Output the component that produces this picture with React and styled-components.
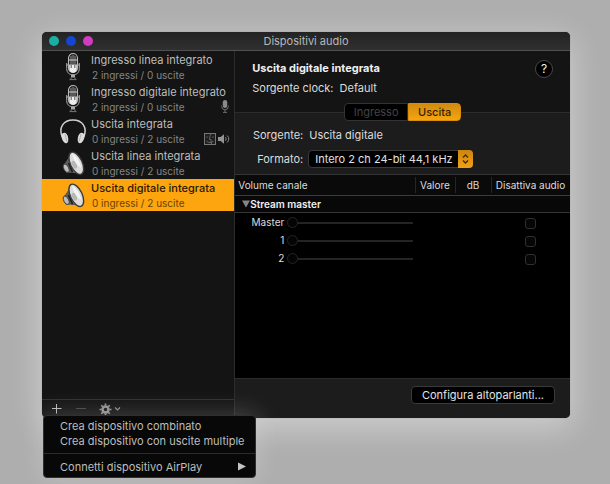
import React, { useState } from 'react';
import styled, { createGlobalStyle } from 'styled-components';

const GlobalStyle = createGlobalStyle`
  *, *::before, *::after { box-sizing: border-box; }
  body { margin: 0; background: #aeaeae; }
  body, button, input, select, table {
    font-family: Inter, "Liberation Sans", sans-serif;
    font-size: 11px;
    line-height: 16px;
  }
  button { margin: 0; padding: 0; border: 0; background: none; color: inherit; }
`;

const Desktop = styled.main`
  display: flex;
  min-height: 100vh;
  padding: 32px 40px 66px 42px;
  overflow: hidden;
`;

const Window = styled.section`
  flex: 1;
  display: flex;
  flex-direction: column;
  min-width: 0;
  border-radius: 5px;
  background: #141414;
  color: #dcdcdc;
  box-shadow: 0 8px 32px 2px rgba(255, 255, 255, 0.4), 0 0 1px #555;
`;

const TitleBar = styled.header`
  display: grid;
  grid-template-columns: 1fr auto 1fr;
  align-items: center;
  height: 19px;
  padding: 0 7px;
  border-bottom: 1px solid #505050;
  border-radius: 5px 5px 0 0;
  background: linear-gradient(#232323, #303030);
`;

const Lights = styled.div`
  display: flex;
  gap: 7px;
`;

const Light = styled.button`
  width: 10px;
  height: 10px;
  border-radius: 50%;
  background: ${(p) => p.$color};
`;

const Title = styled.h1`
  margin: 0;
  font-size: 11px;
  font-weight: 400;
  color: #b8b8b8;
`;

const Panes = styled.div`
  flex: 1;
  display: grid;
  grid-template-columns: minmax(193px, 36.6%) minmax(0, 1fr);
`;

const Sidebar = styled.aside`
  display: flex;
  flex-direction: column;
  border-right: 1px solid #2c2c2c;
`;

const DeviceList = styled.ul`
  flex: 1;
  margin: 0;
  padding: 0;
  list-style: none;
`;

const Device = styled.button`
  display: grid;
  grid-template-columns: 28px minmax(0, 1fr);
  column-gap: 4px;
  align-items: center;
  width: 100%;
  height: 32px;
  padding: 0 0 1px 17px;
  text-align: left;
  color: ${(p) => (p.$selected ? '#2b1800' : '#bdbdbd')};
  background: ${(p) => (p.$selected ? '#fda50f' : 'transparent')};
  font-weight: ${(p) => (p.$selected ? 500 : 400)};
`;

const DeviceArt = styled.svg`
  display: block;
  width: 28px;
  height: 30px;
`;

const DeviceText = styled.span`
  display: grid;
  white-space: nowrap;
`;

const DeviceMeta = styled.span`
  display: flex;
  align-items: center;
  justify-content: space-between;
  height: 14px;
  padding: 0 4px 0 1px;
  font-size: 10px;
  font-weight: 400;
  line-height: 14px;
  color: ${(p) => (p.$selected ? '#6b4300' : '#858585')};
`;

const Badges = styled.span`
  display: flex;
  align-items: center;
  gap: 2px;
`;

const SideFooter = styled.footer`
  position: relative;
  display: flex;
  align-items: center;
  gap: 12px;
  height: 19px;
  padding-left: 9px;
  border-top: 1px solid #303030;
`;

const ToolButton = styled.button`
  display: flex;
  align-items: center;
  gap: 2px;
  height: 16px;
  color: #b4b4b4;
  &:disabled { color: #444; }
`;

const Menu = styled.div`
  position: absolute;
  top: 15px;
  left: 1px;
  z-index: 1;
  width: 213px;
  padding: 2px 0 3px;
  border: 1px solid #303030;
  border-radius: 4px;
  background: #080808;
  box-shadow: 0 0 24px 2px rgba(255, 255, 255, 0.2);
`;

const MenuItem = styled.button`
  display: flex;
  align-items: center;
  justify-content: space-between;
  width: 100%;
  height: 15px;
  padding: 0 9px 0 16px;
  color: #bdbdbd;
  white-space: nowrap;
`;

const MenuRule = styled.hr`
  height: 1px;
  margin: 5px 0;
  border: 0;
  background: #2b2b2b;
`;

const Detail = styled.section`
  display: flex;
  flex-direction: column;
  min-width: 0;
  background: #1c1c1c;
  border-radius: 0 0 5px 0;
`;

const Summary = styled.div`
  display: flex;
  justify-content: space-between;
  align-items: flex-start;
  height: 52px;
  padding: 9px 17px 0 17px;
  background: #141414;
`;

const DeviceTitle = styled.h2`
  margin: 0 0 4px;
  font-size: 11px;
  font-weight: 700;
  color: #f0f0f0;
`;

const Pair = styled.p`
  display: flex;
  gap: 6px;
  margin: 0;
`;

const HelpButton = styled.button`
  width: 18px;
  height: 18px;
  border: 1px solid #484848;
  border-radius: 50%;
  background: #000;
  color: #f0f0f0;
  font-size: 12px;
  line-height: 16px;
`;

const TabStrip = styled.div`
  display: flex;
  justify-content: center;
  background: linear-gradient(#141414 9px, #2c2c2c 9px, #2c2c2c 10px, #1c1c1c 10px);
`;

const Tab = styled.button`
  height: 18px;
  width: ${(p) => (p.$active ? 53 : 64)}px;
  border: 1px solid ${(p) => (p.$active ? '#d98d0a' : '#333')};
  border-radius: ${(p) => (p.$active ? '0 4px 4px 0' : '4px 0 0 4px')};
  background: ${(p) => (p.$active ? 'linear-gradient(#d18a0c, #f5a512)' : '#000')};
  color: ${(p) => (p.$active ? '#3a1c00' : '#444')};
  font-weight: ${(p) => (p.$active ? 500 : 400)};
`;

const Fields = styled.div`
  display: grid;
  grid-template-columns: 51px auto;
  justify-content: start;
  justify-items: start;
  align-items: center;
  gap: 7px 6px;
  padding: 6px 17px 6px;
`;

const FieldLabel = styled.label`
  justify-self: end;
`;

const SelectBox = styled.span`
  display: grid;
  grid-template-columns: minmax(0, 1fr) 15px;
  width: 165px;
  height: 18px;
  margin-left: -1px;
`;

const FormatSelect = styled.select`
  grid-area: 1 / 1 / 2 / 3;
  appearance: none;
  width: 100%;
  height: 18px;
  padding: 0 15px 0 6px;
  border: 1px solid #3a3a3a;
  border-radius: 4px;
  background: #000;
  color: #e0e0e0;
`;

const Stepper = styled.svg`
  grid-area: 1 / 2 / 2 / 3;
  width: 15px;
  height: 18px;
  border-radius: 0 4px 4px 0;
  background: linear-gradient(#cb860e, #f0a115);
  pointer-events: none;
`;

const Channels = styled.div`
  flex: 1;
  border-top: 1px solid #343434;
  border-bottom: 1px solid #2c2c2c;
  background: #000;
`;

const Table = styled.table`
  width: 100%;
  table-layout: fixed;
  border-collapse: separate;
  border-spacing: 0;
  font-size: 10px;
`;

const Col = styled.col`
  width: ${(p) => p.$width};
`;

const HeadCell = styled.th`
  height: 21px;
  padding: 0 0 0 ${(p) => (p.$first ? 3 : 0)}px;
  border-bottom: 1px solid #3c3c3c;
  background: ${(p) =>
    p.$first ? '#0a0a0a' : 'linear-gradient(#262626, #262626) 0 2px / 1px 16px no-repeat #0a0a0a'};
  text-align: ${(p) => (p.$first ? 'left' : 'center')};
  font-weight: 400;
  white-space: nowrap;
`;

const GroupCell = styled.th`
  height: 17px;
  padding: 0 0 0 7px;
  border-bottom: 1px solid #343434;
  background: #080808;
  text-align: left;
  color: #f0f0f0;
`;

const GroupToggle = styled.button`
  display: flex;
  align-items: center;
  font-size: 10px;
  font-weight: 600;
`;

const ChannelRow = styled.tr`
  height: 18px;
`;

const Cell = styled.td`
  padding: 0;
  text-align: center;
  vertical-align: middle;
`;

const Volume = styled.label`
  display: grid;
  grid-template-columns: 49px 126px;
  column-gap: 3px;
  align-items: center;
  text-align: right;
`;

const Slider = styled.input`
  appearance: none;
  width: 126px;
  height: 11px;
  margin: 0;
  background: linear-gradient(#242424, #242424) 10px 5px / 116px 2px no-repeat;
  &::-webkit-slider-thumb {
    appearance: none;
    width: 11px;
    height: 11px;
    border: 1px solid #242424;
    border-radius: 50%;
    background: #040404;
  }
`;

const Mute = styled.input`
  appearance: none;
  display: inline-block;
  vertical-align: middle;
  width: 11px;
  height: 11px;
  margin: 0;
  border: 1px solid #303030;
  border-radius: 3px;
  background: #060606;
  &:checked { background: #fda50f; }
`;

const DetailFooter = styled.footer`
  display: flex;
  justify-content: flex-end;
  padding: 7px 15px 14px;
`;

const PushButton = styled.button`
  height: 18px;
  padding: 0 10px;
  border: 1px solid #3a3a3a;
  border-radius: 4px;
  background: #000;
  color: #e4e4e4;
`;

const MicArt = () => (
  <DeviceArt viewBox="0 0 28 30" aria-hidden="true">
    <rect x="9.5" y="1.5" width="9" height="19" rx="4.5" fill="#242424" stroke="#b8b8b8" strokeWidth="1.1" />
    <path d="M12 4v8M14 3v9M16 4v8" stroke="#9b9b9b" strokeWidth=".9" />
    <path d="M10 8h8" stroke="#ddd" strokeWidth=".9" />
    <path d="M10.2 12.5h7.6v4.5a3.8 3.8 0 0 1-7.6 0z" fill="#ededed" />
    <path d="M12.2 13v3M15.8 13v3" stroke="#555" strokeWidth="1" />
    <path d="M7.7 11v5.5c0 4 2.4 6.3 6.3 6.3s6.3-2.3 6.3-6.3V11M7.5 13h2.5M18 13h2.5" fill="none" stroke="#aaa" strokeWidth="1" />
    <path d="M12 22.5h4v3h-4z" fill="#a8a8a8" />
    <path d="M10.5 27.6h7M12 25.5v2M16 25.5v2" stroke="#777" strokeWidth="1" />
  </DeviceArt>
);

const HeadphonesArt = () => (
  <DeviceArt viewBox="0 0 28 30" aria-hidden="true">
    <path d="M3.2 21C-.6 11.500 4.500 4 14 4s14.600 7.500 10.800 17" fill="none" stroke="#d0d0d0" strokeWidth="1.5" />
    <path d="M3.400 17.500c2.400-1.700 4.900.1 5.600 3.500.7 3.400.3 5.700-1.500 6.200-3.200.7-6.800-7.300-4.100-9.700z" fill="#dcdcdc" />
    <path d="M24.600 17.500c-2.400-1.700-4.900.1-5.600 3.500-.7 3.400-.3 5.700 1.500 6.200 3.200.7 6.800-7.300 4.100-9.700z" fill="#dcdcdc" />
    <path d="M6 18.200l2 7.500M22 18.200l-2 7.500" stroke="#a2a2a2" strokeWidth=".8" />
  </DeviceArt>
);

const SpeakerArt = () => (
  <DeviceArt viewBox="0 0 28 30" aria-hidden="true">
    <path d="M4.500 16.500c2.500-2.200 5-6 6.200-10.500l9.800 20c-4.500-1.200-8.500-1-12-1.200-3-.4-5-5.300-4-8.300z" fill="#5c5c5c" />
    <ellipse cx="7.200" cy="20.300" rx="2.400" ry="4.500" transform="rotate(-25 7.200 20.300)" fill="#bdbdbd" stroke="#333" strokeWidth=".8" />
    <path d="M9.500 15l4 9.200" stroke="#1d1d1d" strokeWidth="1.600" />
    <path d="M11 13l4.500 11.200" stroke="#a6a6a6" strokeWidth="1" />
    <ellipse cx="17.300" cy="15.300" rx="5.900" ry="12" transform="rotate(-25 17.300 15.300)" fill="#dcdcdc" stroke="#3a3a3a" strokeWidth="1.400" />
    <path d="M13 5.800c3.700 1 7.700 7.300 9.400 14.200l-6-4.500z" fill="#f4f4f4" />
    <ellipse cx="15.300" cy="16.800" rx="2.300" ry="4.200" transform="rotate(-25 15.300 16.800)" fill="#b4b8b4" />
  </DeviceArt>
);

const MicBadge = () => (
  <svg width="10" height="13" viewBox="0 0 10 13" role="img" aria-label="Ingresso predefinito">
    <rect x="2.800" y="0" width="4.400" height="8" rx="2.200" fill="#8a8a8a" />
    <path d="M1.700 5.500v1a3.300 3.300 0 0 0 6.600 0v-1M5 10v2M3 12.400h4" fill="none" stroke="#6c6c6c" />
  </svg>
);

const FinderBadge = () => (
  <svg width="12" height="12" viewBox="0 0 12 12" role="img" aria-label="Uscita di sistema">
    <rect x=".5" y=".5" width="11" height="11" fill="#202020" stroke="#777" />
    <path d="M7 .8C5.800 3 5.500 5 5.500 6.500H7c0 2 .2 3.500.6 5M3 3.300v1.500M9 3.300v1.500M2.500 8.200c2 1.700 5 1.700 7 0" fill="none" stroke="#777" strokeWidth=".8" />
  </svg>
);

const SpeakerBadge = () => (
  <svg width="12" height="12" viewBox="0 0 12 12" role="img" aria-label="Uscita predefinita">
    <path d="M0 4h2.600L6 1.200v9.600L2.600 8H0z" fill="#939393" />
    <path d="M7.500 4.200a3 3 0 0 1 0 3.600M9.200 2.500a5.200 5.200 0 0 1 0 7" fill="none" stroke="#868686" strokeWidth="1" />
  </svg>
);

const PlusIcon = () => (
  <svg width="12" height="12" viewBox="0 0 12 12" aria-hidden="true">
    <path d="M5.500 1v9.500M1 5.500h9.500" stroke="currentColor" strokeWidth="1" />
  </svg>
);

const MinusIcon = () => (
  <svg width="12" height="12" viewBox="0 0 12 12" aria-hidden="true">
    <path d="M1 5.500h10" stroke="currentColor" />
  </svg>
);

const GearIcon = () => (
  <svg width="13" height="13" viewBox="0 0 13 13" aria-hidden="true">
    <circle cx="6.500" cy="6.500" r="3" fill="none" stroke="#909090" strokeWidth="2.500" />
    {[0, 45, 90, 135].map((a) => (
      <path key={a} d="M6.500 .5v2M6.500 10.500v2" stroke="#909090" strokeWidth="1.700" transform={`rotate(${a} 6.500 6.500)`} />
    ))}
  </svg>
);

const ChevronIcon = () => (
  <svg width="7" height="6" viewBox="0 0 7 6" aria-hidden="true">
    <path d="M1 1.500l2.500 2.500L6 1.500" fill="none" stroke="#8a8a8a" strokeWidth="1.200" />
  </svg>
);

const devices = [
  { name: 'Ingresso linea integrato', meta: '2 ingressi / 0 uscite', Art: MicArt, badges: [] },
  { name: 'Ingresso digitale integrato', meta: '2 ingressi / 0 uscite', Art: MicArt, badges: [MicBadge] },
  { name: 'Uscita integrata', meta: '0 ingressi / 2 uscite', Art: HeadphonesArt, badges: [FinderBadge, SpeakerBadge] },
  { name: 'Uscita linea integrata', meta: '0 ingressi / 2 uscite', Art: SpeakerArt, badges: [] },
  { name: 'Uscita digitale integrata', meta: '0 ingressi / 2 uscite', Art: SpeakerArt, badges: [] },
];

const channels = ['Master', '1', '2'];

export default function App() {
  const [selected, setSelected] = useState(4);
  const [open, setOpen] = useState(true);
  const [menuOpen, setMenuOpen] = useState(true);

  return (
    <>
      <GlobalStyle />
      <Desktop>
        <Window>
          <TitleBar>
            <Lights>
              <Light $color="#18afa5" aria-label="Chiudi" />
              <Light $color="#1546d2" aria-label="Riduci" />
              <Light $color="#cf3cc0" aria-label="Ingrandisci" />
            </Lights>
            <Title>Dispositivi audio</Title>
          </TitleBar>
          <Panes>
            <Sidebar>
              <DeviceList>
                {devices.map(({ name, meta, Art, badges }, i) => (
                  <li key={name}>
                    <Device $selected={i === selected} aria-pressed={i === selected} onClick={() => setSelected(i)}>
                      <Art />
                      <DeviceText>
                        {name}
                        <DeviceMeta $selected={i === selected}>
                          {meta}
                          <Badges>{badges.map((Badge, n) => <Badge key={n} />)}</Badges>
                        </DeviceMeta>
                      </DeviceText>
                    </Device>
                  </li>
                ))}
              </DeviceList>
              <SideFooter>
                <ToolButton aria-label="Aggiungi" onClick={() => setMenuOpen(!menuOpen)}><PlusIcon /></ToolButton>
                <ToolButton aria-label="Rimuovi" disabled><MinusIcon /></ToolButton>
                <ToolButton aria-label="Azioni"><GearIcon /><ChevronIcon /></ToolButton>
                {menuOpen && (
                  <Menu role="menu">
                    <MenuItem role="menuitem">Crea dispositivo combinato</MenuItem>
                    <MenuItem role="menuitem">Crea dispositivo con uscite multiple</MenuItem>
                    <MenuRule />
                    <MenuItem role="menuitem">
                      Connetti dispositivo AirPlay
                      <svg width="8" height="9" viewBox="0 0 8 9" aria-hidden="true">
                        <path d="M0 .5v8l8-4z" fill="#c4c4c4" />
                      </svg>
                    </MenuItem>
                  </Menu>
                )}
              </SideFooter>
            </Sidebar>
            <Detail>
              <Summary>
                <div>
                  <DeviceTitle>{devices[selected].name}</DeviceTitle>
                  <Pair><span>Sorgente clock:</span><span>Default</span></Pair>
                </div>
                <HelpButton aria-label="Aiuto">?</HelpButton>
              </Summary>
              <TabStrip role="tablist">
                <Tab role="tab" aria-selected="false" disabled>Ingresso</Tab>
                <Tab role="tab" aria-selected="true" $active>Uscita</Tab>
              </TabStrip>
              <Fields>
                <FieldLabel as="span">Sorgente:</FieldLabel>
                <span>Uscita digitale</span>
                <FieldLabel htmlFor="format">Formato:</FieldLabel>
                <SelectBox>
                  <FormatSelect id="format">
                    <option>Intero 2 ch 24-bit 44,1 kHz</option>
                  </FormatSelect>
                  <Stepper viewBox="0 0 15 18" aria-hidden="true">
                    <path d="M5 7.500L7.500 5 10 7.500M5 10.500L7.500 13l2.500-2.500" fill="none" stroke="#4a2600" strokeWidth="1.300" />
                  </Stepper>
                </SelectBox>
              </Fields>
              <Channels>
                <Table>
                  <colgroup>
                    <Col $width="auto" />
                    <Col $width="40px" />
                    <Col $width="36px" />
                    <Col $width="79px" />
                  </colgroup>
                  <thead>
                    <tr>
                      <HeadCell $first>Volume canale</HeadCell>
                      <HeadCell>Valore</HeadCell>
                      <HeadCell>dB</HeadCell>
                      <HeadCell>Disattiva audio</HeadCell>
                    </tr>
                  </thead>
                  <tbody>
                    <tr>
                      <GroupCell colSpan={4}>
                        <GroupToggle aria-expanded={open} onClick={() => setOpen(!open)}>
                          <svg width="8" height="8" viewBox="0 0 8 8" aria-hidden="true">
                            <path d="M0 .5h8l-4 7z" fill="#858585" />
                          </svg>
                          Stream master
                        </GroupToggle>
                      </GroupCell>
                    </tr>
                    {open && channels.map((name) => (
                      <ChannelRow key={name}>
                        <Cell>
                          <Volume>
                            {name}
                            <Slider type="range" min="0" max="100" defaultValue="0" />
                          </Volume>
                        </Cell>
                        <Cell />
                        <Cell />
                        <Cell><Mute type="checkbox" aria-label={`Disattiva audio ${name}`} /></Cell>
                      </ChannelRow>
                    ))}
                  </tbody>
                </Table>
              </Channels>
              <DetailFooter>
                <PushButton>Configura altoparlanti...</PushButton>
              </DetailFooter>
            </Detail>
          </Panes>
        </Window>
      </Desktop>
    </>
  );
}
